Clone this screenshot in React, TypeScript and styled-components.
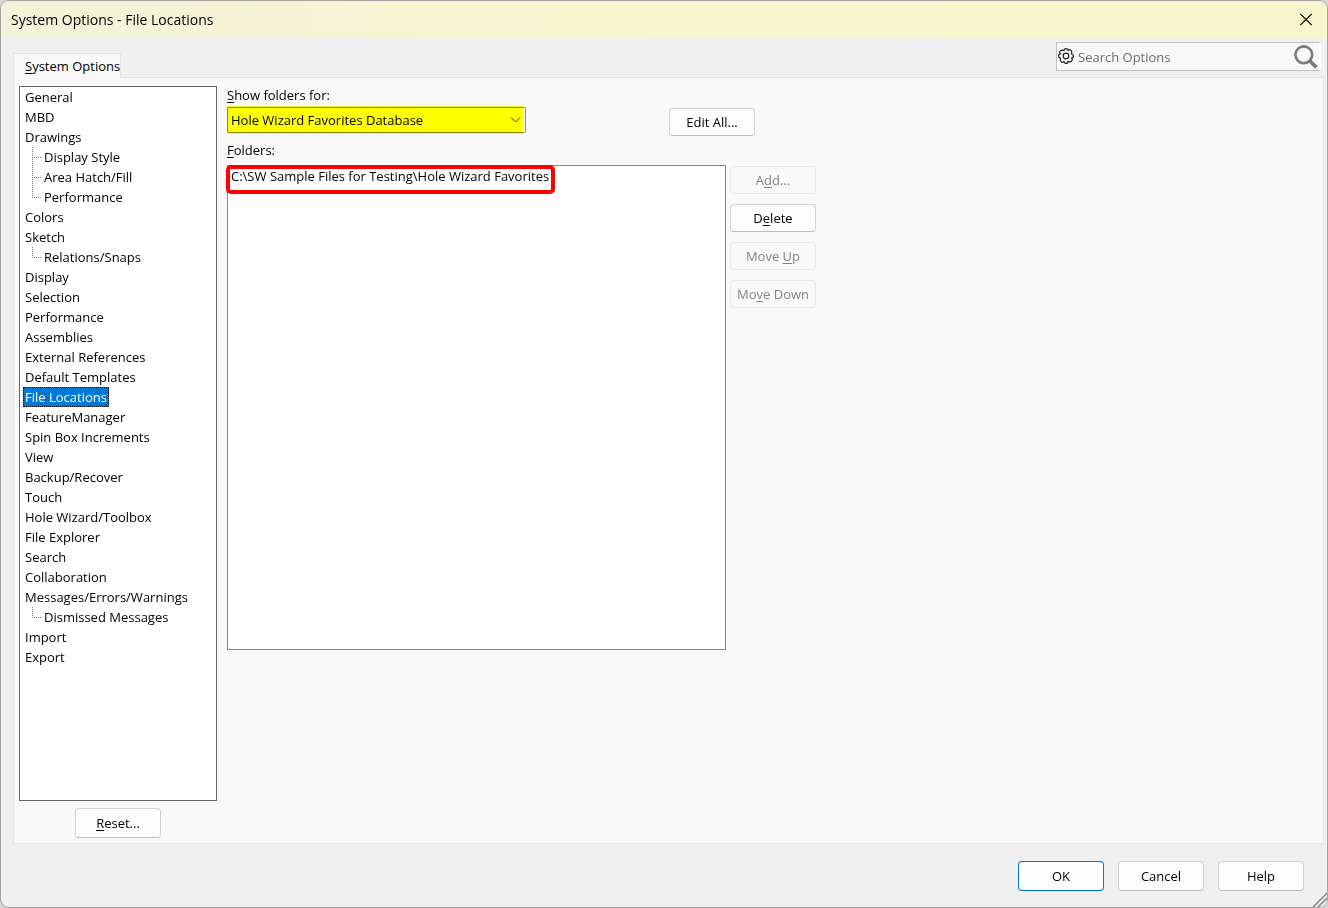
import React, { useState } from 'react'
import styled, { createGlobalStyle, css } from 'styled-components'

const colors = {
  window: '#f0f0f0',
  panel: '#f9f9f9',
  panelBorder: '#e5e5e5',
  border: '#828790',
  text: '#000000',
  disabled: '#838383',
  accent: '#0078d7',
  highlight: '#ffff00',
  callout: '#ff0000',
}

const GlobalStyle = createGlobalStyle`
  * {
    box-sizing: border-box;
  }
  body {
    margin: 0;
    background-color: #d6d6d6;
  }
  body, button, input, select {
    color: ${colors.text};
    font-family: 'Open Sans', 'Noto Sans', sans-serif;
    font-size: 13px;
    line-height: 20px;
  }
  u {
    text-underline-offset: 2px;
    text-decoration-thickness: 1px;
  }
`

const Dialog = styled.div`
  background-color: ${colors.window};
  border: 1px solid #a3a3a3;
  border-radius: 9px;
  display: flex;
  flex-direction: column;
  min-height: 100vh;
  overflow: hidden;
  position: relative;
`
const TitleBar = styled.header`
  align-items: center;
  background: linear-gradient(to right, #f2f3da, #f9f5cf 50%, #f9f5cc);
  display: flex;
  height: 37px;
  justify-content: space-between;
  padding: 0 14px 0 10px;
`
const Title = styled.h1`
  font-size: 14px;
  font-weight: 400;
  margin: 0;
`
const CloseButton = styled.button`
  background: none;
  border: 0;
  display: flex;
  padding: 0;
`
const TopRow = styled.div`
  display: flex;
  height: 39px;
  justify-content: space-between;
  padding: 4px 6px 0 12px;
`
const Tab = styled.button`
  align-self: flex-end;
  background-color: ${colors.panel};
  border: 1px solid ${colors.panelBorder};
  border-bottom: 0;
  height: 25px;
  margin-bottom: -1px;
  padding: 0 0 1px 11px;
  position: relative;
  z-index: 1;
`
const SearchBox = styled.label`
  align-items: center;
  background-color: #f8f8f8;
  border: 1px solid #c0c0c0;
  border-right: 2px solid #ffffff;
  display: flex;
  gap: 4px;
  height: 29px;
  padding: 0 1px;
  width: 265px;
`
const SearchInput = styled.input`
  background: none;
  border: 0;
  flex: 1;
  min-width: 0;
  outline: none;
  padding: 0;

  &::placeholder {
    color: #6d6d6d;
    opacity: 1;
  }
`
const Panel = styled.main`
  background-color: ${colors.panel};
  border: 1px solid ${colors.panelBorder};
  display: flex;
  flex: 1;
  gap: 10px;
  margin: 0 3px 0 12px;
  padding: 8px 5px 5px;
`
const Sidebar = styled.nav`
  align-items: center;
  display: flex;
  flex-direction: column;
  gap: 7px;
  width: 198px;
`
const Tree = styled.ul`
  background-color: #ffffff;
  border: 1px solid #646464;
  flex: 1;
  list-style: none;
  margin: 0;
  padding: 0 3px;
  width: 100%;
`
const TreeItem = styled.li`
  line-height: 20px;
`
const TreeButton = styled.button<{ $selected: boolean }>`
  background: none;
  border: 0;
  display: block;
  height: 20px;
  padding: 0 2px;
  white-space: nowrap;

  ${({ $selected }) =>
    $selected &&
    css`
      background-color: ${colors.accent};
      color: #ffffff;
      outline: 1px dotted #000000;
      outline-offset: -1px;
    `}
`
const SubTree = styled.ul`
  list-style: none;
  margin: 0;
  padding: 0 0 0 9px;
`
const SubTreeItem = styled.li`
  padding-left: 10px;
  position: relative;

  &::before {
    background: repeating-linear-gradient(to bottom, #808080 0 1px, transparent 1px 2px);
    content: '';
    height: 20px;
    left: 0;
    position: absolute;
    top: 0;
    width: 1px;
  }
  &:last-child::before {
    height: 10px;
  }
  &::after {
    background: repeating-linear-gradient(to right, #808080 0 1px, transparent 1px 2px);
    content: '';
    height: 1px;
    left: 0;
    position: absolute;
    top: 10px;
    width: 9px;
  }
`
const Content = styled.section`
  display: flex;
  flex: 1;
  flex-direction: column;
  min-width: 0;
`
const FieldLabel = styled.label`
  line-height: 18px;
`
const FilterRow = styled.div`
  align-items: flex-end;
  display: flex;
  gap: 143px;
  height: 32px;
  margin-bottom: 5px;
`
const SelectWrapper = styled.div`
  align-self: flex-start;
  color: #444444;
  display: flex;
  margin-top: 3px;
  position: relative;
  width: 299px;

  svg {
    pointer-events: none;
    position: absolute;
    right: 5px;
    top: 8px;
  }
`
const Select = styled.select`
  appearance: none;
  background-color: #ffffff;
  border: 1px solid #8a8a8a;
  border-radius: 2px;
  height: 26px;
  padding: 0 24px 0 3px;
  width: 100%;
`
const Highlight = styled.div`
  background-color: ${colors.highlight};
  inset: -1px 3px -1px 0;
  mix-blend-mode: multiply;
  pointer-events: none;
  position: absolute;
`
const FoldersRow = styled.div`
  display: flex;
  gap: 4px;
  margin-top: 6px;
`
const FolderList = styled.ul`
  background-color: #ffffff;
  border: 1px solid ${colors.border};
  list-style: none;
  margin: 0;
  min-height: 485px;
  padding: 0 3px;
  width: 499px;
`
const FolderItem = styled.li`
  line-height: 20px;
  position: relative;
  width: fit-content;
`
const Callout = styled.div`
  border: 4px solid ${colors.callout};
  border-radius: 5px;
  inset: -1px -6px -8px -5px;
  pointer-events: none;
  position: absolute;
`
const ButtonColumn = styled.div`
  display: flex;
  flex-direction: column;
  gap: 10px;
  padding-top: 1px;
`
const Button = styled.button<{ $tall?: boolean; $primary?: boolean }>`
  background-color: #fdfdfd;
  border: 1px solid ${({ $primary }) => ($primary ? colors.accent : '#d0d0d0')};
  border-bottom-color: ${({ $primary }) => ($primary ? '#0067c0' : '#bbbbbb')};
  border-radius: 4px;
  height: ${({ $tall }) => ($tall ? 30 : 28)}px;
  padding: 0;
  width: 86px;

  &:disabled {
    background-color: #f9f9f9;
    border-color: #e9e9e9;
    color: ${colors.disabled};
  }
`
const Footer = styled.footer`
  display: flex;
  gap: 14px;
  justify-content: flex-end;
  padding: 17px 23px 16px;
`
const ResizeGrip = styled.svg`
  bottom: 0;
  position: absolute;
  right: 0;
`

type Page = { name: string; children?: string[] }

const pages: Page[] = [
  { name: 'General' },
  { name: 'MBD' },
  { name: 'Drawings', children: ['Display Style', 'Area Hatch/Fill', 'Performance'] },
  { name: 'Colors' },
  { name: 'Sketch', children: ['Relations/Snaps'] },
  { name: 'Display' },
  { name: 'Selection' },
  { name: 'Performance' },
  { name: 'Assemblies' },
  { name: 'External References' },
  { name: 'Default Templates' },
  { name: 'File Locations' },
  { name: 'FeatureManager' },
  { name: 'Spin Box Increments' },
  { name: 'View' },
  { name: 'Backup/Recover' },
  { name: 'Touch' },
  { name: 'Hole Wizard/Toolbox' },
  { name: 'File Explorer' },
  { name: 'Search' },
  { name: 'Collaboration' },
  { name: 'Messages/Errors/Warnings', children: ['Dismissed Messages'] },
  { name: 'Import' },
  { name: 'Export' },
]

const folders = ['C:\\SW Sample Files for Testing\\Hole Wizard Favorites']

function CloseIcon() {
  return (
    <svg width="14" height="14" viewBox="0 0 14 14" fill="none" stroke="#000" strokeWidth="1.2">
      <path d="M1.3 .8 12.7 12.2M12.7 .8 1.3 12.2" />
    </svg>
  )
}

function GearIcon() {
  return (
    <svg width="16" height="18" viewBox="0 0 16 18" fill="none" stroke="#222" strokeWidth="1.2">
      <path
        strokeLinejoin="round"
        d="M6 2.6Q6 .6 8 .6T10 2.6Q11.6.9 13 2.4T13.4 6Q15.4 6 15.4 8T13.4 10Q15.1 11.6 13.6 13T10 13.4Q10 15.4 8 15.4T6 13.4Q4.400 15.1 3 13.600T2.600 10Q.6 10 .6 8T2.600 6Q.9 4.400 2.400 3T6 2.600Z"
      />
      <circle cx="8" cy="8" r="2.8" />
    </svg>
  )
}

function SearchIcon() {
  return (
    <svg width="24" height="24" viewBox="0 0 24 24" fill="none" stroke="#7a7a7a">
      <circle cx="9.8" cy="9.8" r="8.4" strokeWidth="2.6" />
      <path d="M16 16 22.4 22.4" strokeWidth="3.8" />
    </svg>
  )
}

function PageTree() {
  const [selected, setSelected] = useState('File Locations')

  return (
    <Tree>
      {pages.map(({ name, children }) => (
        <TreeItem key={name}>
          <TreeButton $selected={selected === name} onClick={() => setSelected(name)}>
            {name}
          </TreeButton>
          {children && (
            <SubTree>
              {children.map(child => {
                const id = `${name}/${child}`
                return (
                  <SubTreeItem key={id}>
                    <TreeButton $selected={selected === id} onClick={() => setSelected(id)}>
                      {child}
                    </TreeButton>
                  </SubTreeItem>
                )
              })}
            </SubTree>
          )}
        </TreeItem>
      ))}
    </Tree>
  )
}

export default function App() {
  return (
    <>
      <GlobalStyle />
      <Dialog role="dialog" aria-labelledby="dialog-title">
        <TitleBar>
          <Title id="dialog-title">System Options - File Locations</Title>
          <CloseButton aria-label="Close">
            <CloseIcon />
          </CloseButton>
        </TitleBar>
        <TopRow>
          <Tab>
            <u>S</u>ystem Options
          </Tab>
          <SearchBox>
            <GearIcon />
            <SearchInput placeholder="Search Options" aria-label="Search Options" />
            <SearchIcon />
          </SearchBox>
        </TopRow>
        <Panel>
          <Sidebar>
            <PageTree />
            <Button $tall>
              <u>R</u>eset...
            </Button>
          </Sidebar>
          <Content>
            <FieldLabel htmlFor="folder-type">
              <u>S</u>how folders for:
            </FieldLabel>
            <FilterRow>
              <SelectWrapper>
                <Select id="folder-type">
                  <option>Hole Wizard Favorites Database</option>
                </Select>
                <svg width="11" height="10" viewBox="0 0 11 10" fill="none" stroke="currentColor">
                  <path d="M1 2.5 5.5 7 10 2.5" />
                </svg>
                <Highlight />
              </SelectWrapper>
              <Button>Edit All...</Button>
            </FilterRow>
            <FieldLabel as="span" id="folders-label">
              <u>F</u>olders:
            </FieldLabel>
            <FoldersRow>
              <FolderList aria-labelledby="folders-label">
                {folders.map(folder => (
                  <FolderItem key={folder}>
                    {folder}
                    <Callout />
                  </FolderItem>
                ))}
              </FolderList>
              <ButtonColumn>
                <Button disabled>
                  A<u>d</u>d...
                </Button>
                <Button>
                  D<u>e</u>lete
                </Button>
                <Button disabled>
                  Move <u>U</u>p
                </Button>
                <Button disabled>
                  Mo<u>v</u>e Down
                </Button>
              </ButtonColumn>
            </FoldersRow>
          </Content>
        </Panel>
        <Footer>
          <Button $tall $primary>
            OK
          </Button>
          <Button $tall>Cancel</Button>
          <Button $tall>Help</Button>
        </Footer>
        <ResizeGrip width="15" height="15" viewBox="0 0 15 15" fill="none">
          <path d="M0 15 15 0V15Z" fill="#e6e6e6" />
          <path d="M1 15 15 1M6 15 15 6" stroke="#8c8c8c" strokeWidth="1.6" />
          <path d="M-.5 14.5 14.5-.5M4 15 15 4M9 15 15 9" stroke="#fff" />
        </ResizeGrip>
      </Dialog>
    </>
  )
}
